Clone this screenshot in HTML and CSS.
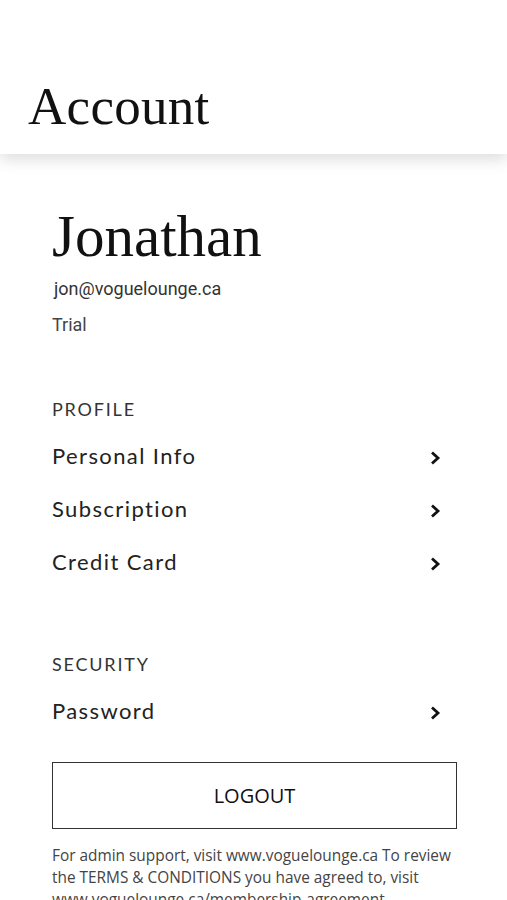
FILE: index.html
```html
<!DOCTYPE html>
<html lang="en">
<head>
<meta charset="UTF-8">
<meta name="viewport" content="width=device-width, initial-scale=1.0">
<title>Account</title>
<link rel="stylesheet" href="styles.css">
</head>
<body>

<header>
    <h1>Account</h1>
</header>

<div class="container">
    <div class="perfil">
        <h2>Jonathan</h2>
        <p class="email">jon@voguelounge.ca</p>
        <p class="plano">Trial</p>
    </div>

    <div class="secao">
        <h3>PROFILE</h3>
        <a class="item" href="#">Personal Info <span class="seta"><svg width="12" height="16" viewBox="0 0 12 16"><path d="M3 2.5 L9 8 L3 13.5" fill="none" stroke="#111" stroke-width="2.8" stroke-linejoin="miter"/></svg></span></a>
        <a class="item" href="#">Subscription <span class="seta"><svg width="12" height="16" viewBox="0 0 12 16"><path d="M3 2.5 L9 8 L3 13.5" fill="none" stroke="#111" stroke-width="2.8" stroke-linejoin="miter"/></svg></span></a>
        <a class="item" href="#">Credit Card <span class="seta"><svg width="12" height="16" viewBox="0 0 12 16"><path d="M3 2.5 L9 8 L3 13.5" fill="none" stroke="#111" stroke-width="2.8" stroke-linejoin="miter"/></svg></span></a>
    </div>

    <div class="secao">
        <h3>SECURITY</h3>
        <a class="item" href="#">Password <span class="seta"><svg width="12" height="16" viewBox="0 0 12 16"><path d="M3 2.5 L9 8 L3 13.5" fill="none" stroke="#111" stroke-width="2.8" stroke-linejoin="miter"/></svg></span></a>
    </div>

    <button class="logout">LOGOUT</button>

    <p class="rodape">For admin support, visit www.voguelounge.ca To review the TERMS &amp; CONDITIONS you have agreed to, visit www.voguelounge.ca/membership-agreement</p>
</div>

</body>
</html>
```

FILE: styles.css
```css
body { font-family: "Open Sans", Arial, sans-serif; background: #fff; margin: 0; color: #222; }
header { background: #fff; height: 154px; box-sizing: border-box; padding: 78px 0 0 28px; box-shadow: 0 6px 14px rgba(0,0,0,0.13); position: relative; }
h1 { margin: 0; font-family: "Liberation Serif", serif; font-weight: normal; font-size: 53px; line-height: 56px; letter-spacing: 0.3px; color: #111; }
.container { padding: 50px 50px 0 52px; }
.perfil h2 { margin: 0; font-family: "Liberation Serif", serif; font-weight: normal; font-size: 59px; line-height: 64px; color: #111; }
.email { margin: 9px 0 0 2px; font-family: Roboto, sans-serif; font-size: 18px; line-height: 24px; color: #333; }
.plano { margin: 12px 0 0; font-family: Roboto, sans-serif; font-size: 18px; line-height: 24px; color: #444; }
.secao { margin-top: 60px; }
.secao + .secao { margin-top: 64px; }
.secao h3 { margin: 0 0 8px; font-family: Lato, sans-serif; font-weight: normal; font-size: 18px; letter-spacing: 1.8px; line-height: 24px; color: #333; }
.item { display: flex; justify-content: space-between; align-items: center; height: 53px; padding-right: 16px; font-family: Lato, sans-serif; font-size: 22px; letter-spacing: 1.4px; color: #222; text-decoration: none; }
.seta { display: flex; padding-top: 4px; }
.logout { display: block; width: 100%; height: 67px; margin-top: 25px; background: #fff; border: 1.5px solid #333; font-family: "Open Sans", sans-serif; font-size: 20px; color: #111; cursor: pointer; }
.rodape { margin: 16px 0 0; font-size: 15.4px; line-height: 22px; color: #444; }
```
